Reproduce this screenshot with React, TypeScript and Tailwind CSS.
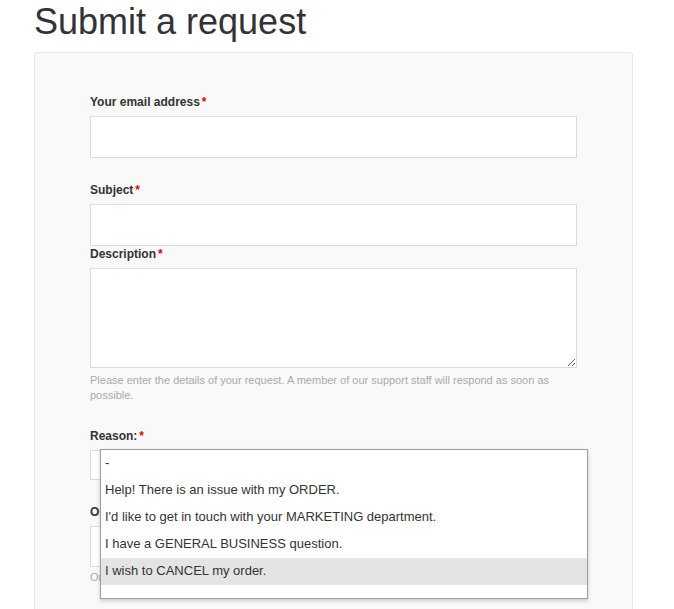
import React from 'react';

const reasons = [
  '-',
  'Help! There is an issue with my ORDER.',
  "I'd like to get in touch with your MARKETING department.",
  'I have a GENERAL BUSINESS question.',
  'I wish to CANCEL my order.',
];

const Label: React.FC<{ text: string; required?: boolean }> = ({ text, required }) => (
  <label className="block text-[12px] leading-[15px] font-bold text-[#333] mb-[6px]">
    {text}
    {required && <span className="text-[#e00] ml-[2px]">*</span>}
  </label>
);

const App: React.FC = () => {
  const highlighted = 4;

  return (
    <div className="min-h-screen bg-white font-['Liberation_Sans',Arial,sans-serif] text-[#333] overflow-hidden">
      <div className="ml-[34px] w-[599px]">
        <h1 className="text-[36px] leading-[40px] pt-[2px] mb-[10px] font-normal text-[#333]">Submit a request</h1>

        <div className="border border-[#e8e8e8] rounded-[3px] bg-[#f9f9f9] px-[55px] pt-[42px] pb-[80px]">
          {/* Email */}
          <div className="mb-[25px]">
            <Label text="Your email address" required />
            <input className="block w-full h-[42px] bg-white border border-[#dadada] outline-none" />
          </div>

          {/* Subject */}
          <div className="mb-[1px]">
            <Label text="Subject" required />
            <input className="block w-full h-[42px] bg-white border border-[#dadada] outline-none" />
          </div>

          {/* Description */}
          <div className="mb-[26px]">
            <Label text="Description" required />
            <textarea className="block w-full h-[100px] bg-white border border-[#dadada] outline-none" />
            <p className="mt-[5px] text-[11px] leading-[15px] text-[#aaa]">
              Please enter the details of your request. A member of our support staff will respond as soon as possible.
            </p>
          </div>

          {/* Reason */}
          <div className="mb-[25px]">
            <Label text="Reason:" required />
            <div className="relative">
              <div className="h-[30px] w-full bg-white border border-[#dadada]" />
              <div className="absolute left-[10px] top-[-1px] z-10 w-[488px] h-[150px] bg-white border border-[#9c9c9c] shadow-[0_2px_4px_rgba(0,0,0,0.18)]">
                {reasons.map((r, i) => (
                  <div
                    key={r}
                    className={`h-[27px] leading-[25px] pl-[4px] text-[13px] text-[#333] whitespace-nowrap ${
                      i === highlighted ? 'bg-[#e4e4e4]' : ''
                    }`}
                  >
                    {r}
                  </div>
                ))}
              </div>
            </div>
          </div>

          {/* Order number */}
          <div>
            <Label text="Order number" />
            <input className="block w-full h-[41px] bg-white border border-[#dadada] outline-none" />
            <p className="mt-[3px] text-[11px] leading-[15px] text-[#aaa]">Or the email used to place your order.</p>
          </div>
        </div>
      </div>
    </div>
  );
};

export default App;
